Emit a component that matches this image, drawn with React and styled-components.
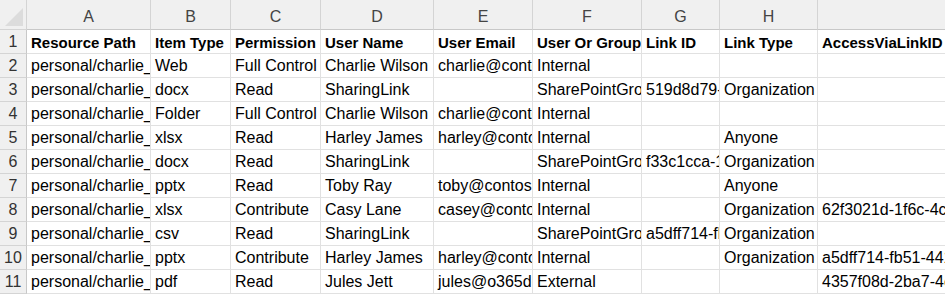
import React from "react";
import styled, { createGlobalStyle } from "styled-components";

const Global = createGlobalStyle`
  html, body {
    margin: 0;
    padding: 0;
    background: #ffffff;
    overflow: hidden;
  }
  * {
    box-sizing: border-box;
  }
`;

const widths = [27, 124, 80, 90, 113, 99, 109, 78, 98, 240];

const Sheet = styled.div`
  display: grid;
  grid-template-columns: ${widths.map((w) => w + "px").join(" ")};
  grid-auto-rows: 24px;
  grid-template-rows: 30px;
  width: 945px;
  height: 294px;
  overflow: hidden;
  font-family: "Liberation Sans", Arial, sans-serif;
  color: #000;
`;

const Corner = styled.div`
  position: relative;
  background: #f0f0f0;
  border-right: 1px solid #d4d4d4;
  border-bottom: 1px solid #d4d4d4;

  &::after {
    content: "";
    position: absolute;
    right: 3px;
    bottom: 3px;
    width: 0;
    height: 0;
    border-left: 18px solid transparent;
    border-bottom: 18px solid #dcdcdc;
  }
`;

const ColHead = styled.div`
  background: #f0f0f0;
  border-right: 1px solid #d4d4d4;
  border-bottom: 1px solid #c8c8c8;
  display: flex;
  align-items: flex-end;
  justify-content: center;
  padding-bottom: 3px;
  font-size: 16px;
  color: #444;
`;

const RowHead = styled.div`
  background: #f0f0f0;
  border-right: 1px solid #c8c8c8;
  border-bottom: 1px solid #d4d4d4;
  display: flex;
  align-items: flex-end;
  justify-content: center;
  padding-bottom: 2px;
  font-size: 16px;
  color: #333;
`;

const Cell = styled.div`
  border-right: 1px solid #e1e1e1;
  border-bottom: 1px solid #e1e1e1;
  display: flex;
  align-items: flex-end;
  padding: 0 0 2px 4px;
  white-space: nowrap;
  overflow: hidden;
  font-size: ${(p) => (p.$bold ? "15px" : "16px")};
  font-weight: ${(p) => (p.$bold ? 700 : 400)};
`;

const letters = ["A", "B", "C", "D", "E", "F", "G", "H", ""];

const header = [
  "Resource Path",
  "Item Type",
  "Permission",
  "User Name",
  "User Email",
  "User Or Group",
  "Link ID",
  "Link Type",
  "AccessViaLinkID",
];

const P = "personal/charlie_wilson_contoso_com";

const rows = [
  [P, "Web", "Full Control", "Charlie Wilson", "charlie@contoso.com", "Internal", "", "", ""],
  [P, "docx", "Read", "SharingLink", "", "SharePointGroup", "519d8d79-4a0e", "Organization", ""],
  [P, "Folder", "Full Control", "Charlie Wilson", "charlie@contoso.com", "Internal", "", "", ""],
  [P, "xlsx", "Read", "Harley James", "harley@contoso.com", "Internal", "", "Anyone", ""],
  [P, "docx", "Read", "SharingLink", "", "SharePointGroup", "f33c1cca-1b2d", "Organization", ""],
  [P, "pptx", "Read", "Toby Ray", "toby@contoso.com", "Internal", "", "Anyone", ""],
  [P, "xlsx", "Contribute", "Casy Lane", "casey@contoso.com", "Internal", "", "Organization", "62f3021d-1f6c-4c1a-9b7e"],
  [P, "csv", "Read", "SharingLink", "", "SharePointGroup", "a5dff714-fb51", "Organization", ""],
  [P, "pptx", "Contribute", "Harley James", "harley@contoso.com", "Internal", "", "Organization", "a5dff714-fb51-4417-8a3c"],
  [P, "pdf", "Read", "Jules Jett", "jules@o365dev.onmicrosoft.com", "External", "", "", "4357f08d-2ba7-4c9e-8d1f"],
];

export default function App() {
  return (
    <>
      <Global />
      <Sheet>
        <Corner />
        {letters.map((l, i) => (
          <ColHead key={"c" + i}>{l}</ColHead>
        ))}

        <RowHead>1</RowHead>
        {header.map((h, i) => (
          <Cell key={"h" + i} $bold>
            {h}
          </Cell>
        ))}

        {rows.map((r, ri) => (
          <React.Fragment key={ri}>
            <RowHead>{ri + 2}</RowHead>
            {r.map((v, ci) => (
              <Cell key={ci}>{v}</Cell>
            ))}
          </React.Fragment>
        ))}
      </Sheet>
    </>
  );
}
